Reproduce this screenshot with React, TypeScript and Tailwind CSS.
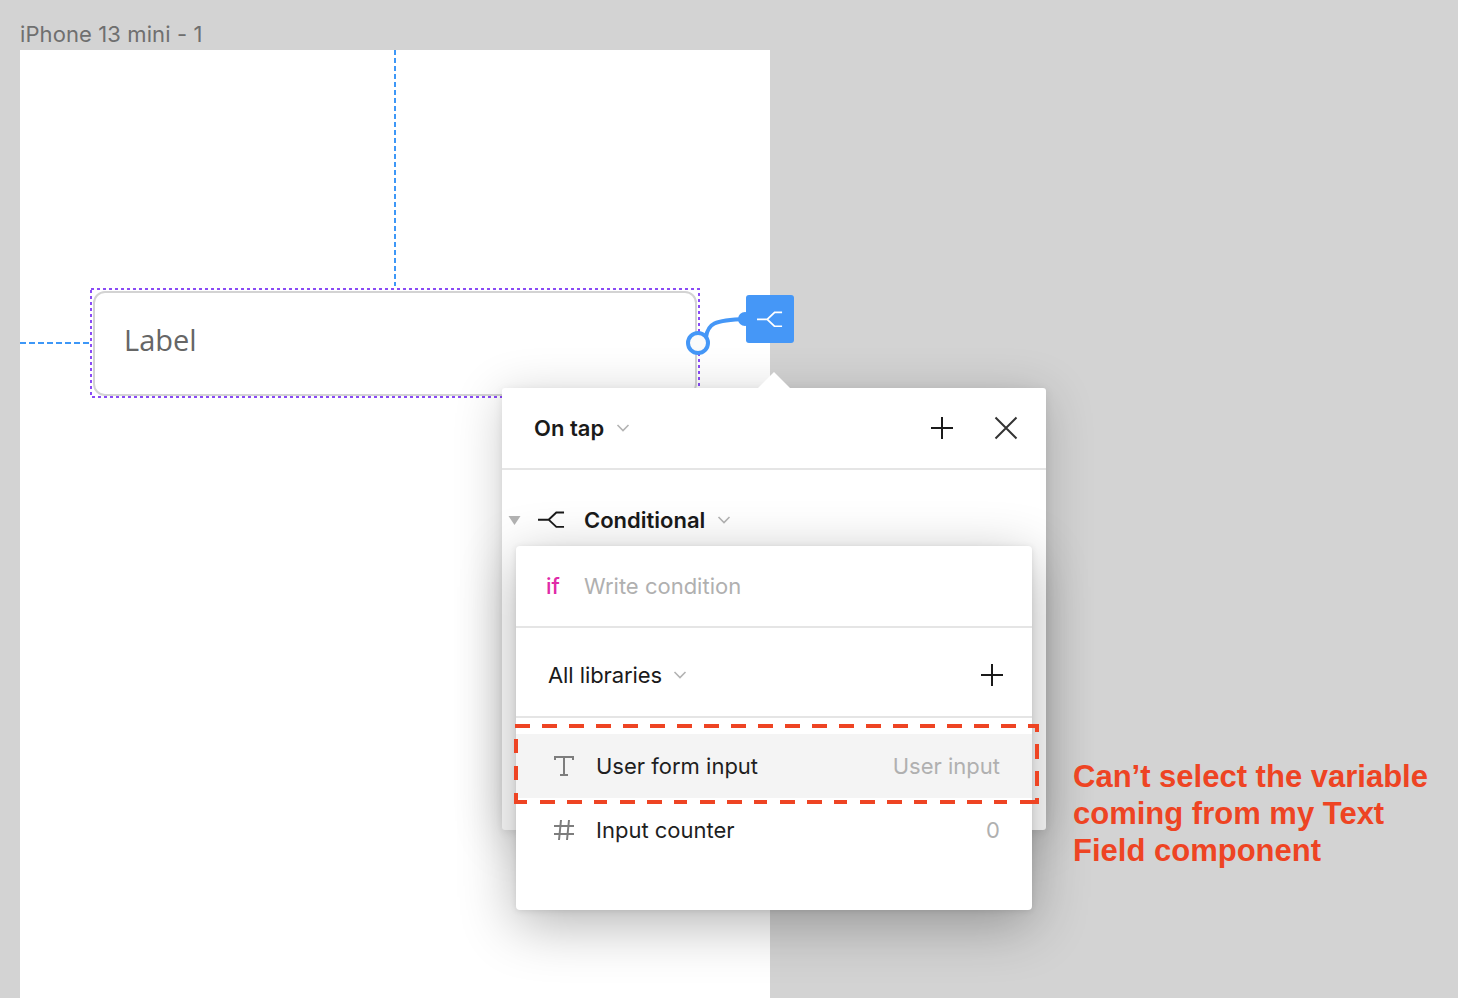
import React from "react";

const Chevron = ({ className = "" }: { className?: string }) => (
  <svg width="14" height="8" viewBox="0 0 14 8" fill="none" className={className}>
    <path d="M1.5 1 L7 6.5 L12.5 1" stroke="#b3b3b3" strokeWidth="1.6" />
  </svg>
);

const Plus = () => (
  <svg width="24" height="24" viewBox="0 0 24 24" fill="none">
    <path d="M12 1V23M1 12H23" stroke="#1a1a1a" strokeWidth="2" />
  </svg>
);

const Close = () => (
  <svg width="24" height="24" viewBox="0 0 24 24" fill="none">
    <path d="M1.5 1.5L22.5 22.5M22.5 1.5L1.5 22.5" stroke="#333333" strokeWidth="2" />
  </svg>
);

const Branch = ({ color, w = 28, sw = 2 }: { color: string; w?: number; sw?: number }) => (
  <svg width={w} height={(w * 18) / 28} viewBox="0 0 28 18" fill="none">
    <path d="M0 9H11L19 1.5H27M11 9L19 16.5H27" stroke={color} strokeWidth={sw} />
  </svg>
);

const TextIcon = () => (
  <svg width="22" height="22" viewBox="0 0 22 22" fill="none">
    <path d="M2 5V2H20V5M11 2V20M7 20H15" stroke="#7d7d7d" strokeWidth="2" />
  </svg>
);

const HashIcon = () => (
  <svg width="22" height="22" viewBox="0 0 22 22" fill="none">
    <path d="M8 1L6 21M16 1L14 21M1 7H21M1 15H21" stroke="#7d7d7d" strokeWidth="2" />
  </svg>
);

const Row = ({ icon, name, value, active }: { icon: React.ReactNode; name: string; value: string; active?: boolean }) => (
  <div className={`flex h-[64px] items-center pl-[37px] pr-[32px] ${active ? "bg-[#f4f4f4]" : "bg-white"}`}>
    <div className="flex w-[43px] shrink-0">{icon}</div>
    <span className="text-[22px] leading-none text-[#1f1f1f]">{name}</span>
    <span className="ml-auto text-[22px] leading-none text-[#b0b0b0]">{value}</span>
  </div>
);

export default function App() {
  return (
    <div
      className="relative h-[998px] w-[1458px] overflow-hidden bg-[#d3d3d3]"
      style={{ fontFamily: "Inter, 'Liberation Sans', sans-serif" }}
    >
      <div className="absolute left-[20px] top-[20px] text-[22px] leading-[28px] tracking-[0.1px] text-[#6f6f6f]">iPhone 13 mini - 1</div>

      {/* Frame */}
      <div className="absolute left-[20px] top-[50px] h-[948px] w-[750px] bg-white">
        <div className="absolute left-[374px] top-0 h-[236px] w-[2px] bg-[repeating-linear-gradient(to_bottom,#3d97f7_0_5px,transparent_5px_8px)]" />
        <div className="absolute left-0 top-[292px] h-[2px] w-[70px] bg-[repeating-linear-gradient(to_right,#3d97f7_0_6px,transparent_6px_9px)]" />
        <div className="absolute left-[70px] top-[238px] h-[110px] w-[610px] px-[3px] pt-[3px] pb-[2px]">
          <svg className="absolute left-0 top-0" width="610" height="110" viewBox="0 0 610 110" fill="none">
            <rect x="1" y="1" width="608" height="108" stroke="#8a4bf5" strokeWidth="2" strokeDasharray="3 3" />
          </svg>
          <div className="flex h-full w-full items-center rounded-[12px] border-[2px] border-[#d3d3d3] pb-[8px] pl-[29px]">
            <span
              className="text-[29px] leading-none text-[#666666]"
              style={{ fontFamily: "'Open Sans', sans-serif" }}
            >
              Label
            </span>
          </div>
        </div>
      </div>

      {/* Connector */}
      <svg className="absolute left-[680px] top-[290px]" width="80" height="80" viewBox="0 0 80 80" fill="none">
        <path d="M26 47C28 34 33 30 66 29" stroke="#4597f7" strokeWidth="4" />
        <circle cx="18" cy="53" r="10" fill="#fafafa" stroke="#4597f7" strokeWidth="4" />
        <circle cx="65" cy="29" r="7" fill="#4597f7" />
      </svg>
      <div className="absolute left-[746px] top-[295px] flex h-[48px] w-[48px] items-center justify-center rounded-[3px] bg-[#4597f7]">
        <Branch color="#ffffff" w={26} />
      </div>

      {/* Interaction panel */}
      <div className="absolute left-[502px] top-[388px] h-[442px] w-[544px] rounded-[3px] bg-white shadow-[0_8px_50px_rgba(0,0,0,0.2),0_2px_10px_rgba(0,0,0,0.08)]">
        <div className="absolute left-[260px] top-[-11px] h-[24px] w-[24px] rotate-45 bg-white" />
        <div className="relative flex h-[82px] items-center border-b-2 border-[#e5e5e5] pl-[32px] pr-[28px]">
          <span className="text-[22px] font-semibold leading-none text-[#1a1a1a]">On tap</span>
          <Chevron className="ml-[12px]" />
          <div className="ml-auto flex gap-[40px]">
            <Plus />
            <Close />
          </div>
        </div>
        <div className="flex h-[100px] items-center pl-[6px]">
          <svg width="13" height="9" viewBox="0 0 13 9" className="mr-[17px]">
            <path d="M0.5 0H12.5L6.5 9Z" fill="#b3b3b3" />
          </svg>
          <Branch color="#1a1a1a" w={27} />
          <span className="ml-[19px] text-[22px] font-semibold leading-none text-[#1a1a1a]">Conditional</span>
          <Chevron className="ml-[12px]" />
        </div>
      </div>

      {/* Variable picker */}
      <div className="absolute left-[516px] top-[546px] flex h-[364px] w-[516px] flex-col rounded-[4px] bg-white shadow-[0_14px_56px_rgba(0,0,0,0.3),0_1px_6px_rgba(0,0,0,0.1)]">
        <div className="flex h-[82px] items-center border-b-2 border-[#e5e5e5] pl-[30px]">
          <span className="w-[38px] text-[22px] font-medium leading-none text-[#e02aa8]">if</span>
          <span className="text-[22px] leading-none text-[#b0b0b0]">Write condition</span>
        </div>
        <div className="flex h-[90px] items-center border-b-2 border-[#e5e5e5] pl-[32px] pr-[28px] pt-[6px]">
          <span className="text-[22px] leading-none tracking-[-0.08px] text-[#1a1a1a]">All libraries</span>
          <Chevron className="ml-[11px]" />
          <div className="ml-auto"><Plus /></div>
        </div>
        <div className="h-[16px]" />
        <Row active icon={<TextIcon />} name="User form input" value="User input" />
        <Row icon={<HashIcon />} name="Input counter" value="0" />
      </div>

      {/* Red dashed highlight */}
      <svg className="absolute left-[510px] top-[720px]" width="535" height="90" viewBox="0 0 535 90" fill="none">
        <g stroke="#ee4423" strokeWidth="4">
          <path d="M5 6H529" strokeDasharray="15 12" />
          <path d="M4 82H529" strokeDasharray="13 13 15 12 15 12" strokeDashoffset="0" />
          <path d="M6 19V84" strokeDasharray="14 13" />
          <path d="M527 4V84" strokeDasharray="8 12 15 12 15 12 15 12" />
        </g>
      </svg>

      {/* Annotation */}
      <div
        className="absolute left-[1073px] top-[758px] w-[370px] text-[31px] font-bold leading-[37px] text-[#ee4423]"
        style={{ fontFamily: "'Liberation Sans', Arial, sans-serif" }}
      >
        Can’t select the variable
        <br />
        coming from my Text
        <br />
        Field component
      </div>
    </div>
  );
}
